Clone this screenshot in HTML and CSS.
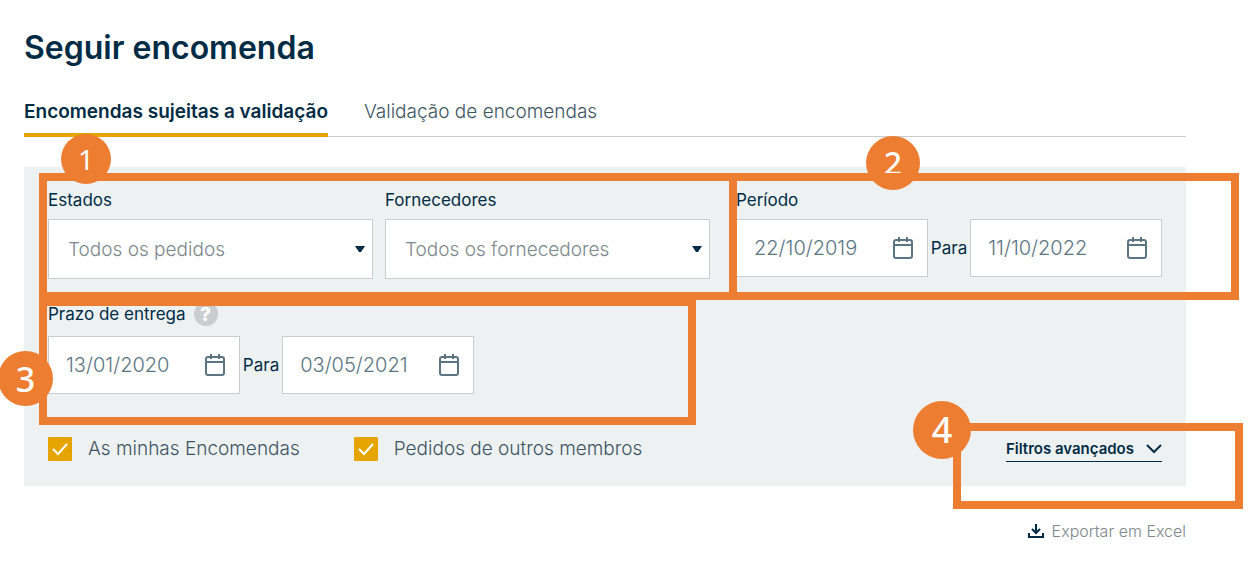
FILE: index.html
```html
<!DOCTYPE html>
<html lang="pt">
<head>
  <meta charset="UTF-8" />
  <meta name="viewport" content="width=device-width, initial-scale=1.0" />
  <title>Seguir encomenda</title>
  <link rel="stylesheet" href="styles.css">
</head>
<body>
  <!-- shared icons -->
  <svg class="sprite" aria-hidden="true">
    <symbol id="calendar" viewBox="0 0 20 24">
      <rect x="1" y="4" width="18" height="18" rx="2" fill="none" stroke="currentColor" stroke-width="2"/>
      <path d="M1 9h18M6 1v5M14 1v5" fill="none" stroke="currentColor" stroke-width="2"/>
    </symbol>
    <symbol id="arrow" viewBox="0 0 10 6">
      <path d="M0 0h10L6 6H4z" fill="currentColor"/>
    </symbol>
  </svg>

  <main class="page">
    <h1>Seguir encomenda</h1>

    <nav class="tabs">
      <a href="#validacao" class="tab active">Encomendas sujeitas a validação</a>
      <a href="#encomendas" class="tab">Validação de encomendas</a>
    </nav>

    <form class="filters">
      <div class="filter-row">
        <div class="selects callout">
          <span class="badge badge-1">1</span>
          <div class="field">
            <label for="estados">Estados</label>
            <div class="select-box">
              <select id="estados" name="estados">
                <option>Todos os pedidos</option>
              </select>
              <svg class="arrow"><use href="#arrow"/></svg>
            </div>
          </div>
          <div class="field">
            <label for="fornecedores">Fornecedores</label>
            <div class="select-box">
              <select id="fornecedores" name="fornecedores">
                <option>Todos os fornecedores</option>
              </select>
              <svg class="arrow"><use href="#arrow"/></svg>
            </div>
          </div>
          <span class="frame frame-1"></span>
        </div>

        <div class="period callout">
          <span class="badge badge-2">2</span>
          <label for="periodo-de">Período</label>
          <div class="date-range">
            <div class="date-box">
              <input type="text" id="periodo-de" name="periodo-de" value="22/10/2019">
              <button type="button" class="calendar" aria-label="Calendário"><svg><use href="#calendar"/></svg></button>
            </div>
            <label for="periodo-ate" class="to">Para</label>
            <div class="date-box">
              <input type="text" id="periodo-ate" name="periodo-ate" value="11/10/2022">
              <button type="button" class="calendar" aria-label="Calendário"><svg><use href="#calendar"/></svg></button>
            </div>
          </div>
          <span class="frame frame-2"></span>
        </div>
      </div>

      <div class="delivery callout">
        <div class="label-row">
          <label for="prazo-de">Prazo de entrega</label>
          <button type="button" class="help">?</button>
        </div>
        <div class="date-range">
          <div class="date-box">
            <input type="text" id="prazo-de" name="prazo-de" value="13/01/2020">
            <button type="button" class="calendar" aria-label="Calendário"><svg><use href="#calendar"/></svg></button>
          </div>
          <label for="prazo-ate" class="to">Para</label>
          <div class="date-box">
            <input type="text" id="prazo-ate" name="prazo-ate" value="03/05/2021">
            <button type="button" class="calendar" aria-label="Calendário"><svg><use href="#calendar"/></svg></button>
          </div>
        </div>
        <span class="frame frame-3"></span>
        <span class="badge badge-3">3</span>
      </div>

      <div class="options">
        <div class="check">
          <span class="check-box">
            <input type="checkbox" id="minhas" name="minhas" checked>
            <svg class="tick" viewBox="0 0 24 24"><path d="M5 12l5 5 9-10" fill="none" stroke="#fff" stroke-width="2"/></svg>
          </span>
          <label for="minhas">As minhas Encomendas</label>
        </div>
        <div class="check">
          <span class="check-box">
            <input type="checkbox" id="outros" name="outros" checked>
            <svg class="tick" viewBox="0 0 24 24"><path d="M5 12l5 5 9-10" fill="none" stroke="#fff" stroke-width="2"/></svg>
          </span>
          <label for="outros">Pedidos de outros membros</label>
        </div>
        <div class="advanced-box callout">
          <button type="button" class="advanced">
            Filtros avançados
            <svg class="chevron" viewBox="0 0 16 10"><path d="M1 1l7 7 7-7" fill="none" stroke="currentColor" stroke-width="2"/></svg>
          </button>
          <span class="frame frame-4"></span>
          <span class="badge badge-4">4</span>
        </div>
      </div>
    </form>

    <div class="export-row">
      <a href="#excel" class="export">
        <svg class="download" viewBox="0 0 16 14"><path d="M8 0v9M4 5l4 4 4-4M1 9v4h14V9" fill="none" stroke="#002b45" stroke-width="2"/></svg>
        Exportar em Excel
      </a>
    </div>
  </main>
</body>
</html>
```
FILE: styles.css
```css
* {
  box-sizing: border-box;
}

body {
  margin: 0;
  font-family: Inter, "Liberation Sans", sans-serif;
  font-size: 17px;
  line-height: 24px;
  color: #002b45;
  background-color: #fff;
}

input, select, button {
  font-family: inherit;
  color: inherit;
}

button {
  padding: 0;
  border: none;
  background: none;
  cursor: pointer;
}

svg {
  display: block;
}

.sprite {
  position: absolute;
  width: 0;
  height: 0;
}

.page {
  padding: 28px 68px 20px 24px;
}

h1 {
  margin: 0 0 32px;
  font-size: 32px;
  line-height: 40px;
  font-weight: 600;
}

/* tabs */
.tabs {
  display: flex;
  gap: 36px;
  border-bottom: 1px solid #c9cdd0;
}

.tab {
  margin-bottom: -1px;
  padding-bottom: 9px;
  border-bottom: 4px solid transparent;
  font-size: 19px;
  font-weight: 300;
  color: #3d5563;
  text-decoration: none;
}

.tab.active {
  border-bottom-color: #e5a400;
  font-weight: 600;
  color: #002b45;
}

/* filters */
.filters {
  margin-top: 30px;
  padding: 21px 24px 24px;
  background-color: #edf1f2;
}

.filter-row {
  display: flex;
  gap: 26px;
}

.selects {
  flex: 1;
  display: grid;
  grid-template-columns: 1fr 1fr;
  gap: 12px;
}

.field label, .period > label {
  display: block;
  margin-bottom: 7px;
}

.select-box {
  position: relative;
}

select {
  display: block;
  width: 100%;
  height: 60px;
  padding: 0 32px 0 19px;
  border: 1px solid #c9cdd0;
  border-radius: 0;
  appearance: none;
  background-color: #fff;
  font-size: 19px;
  font-weight: 300;
  color: #7d878c;
}

.arrow {
  position: absolute;
  top: 27px;
  right: 8px;
  width: 10px;
  height: 6px;
  pointer-events: none;
}

.period, .delivery {
  width: 426px;
}

.date-range {
  display: flex;
  align-items: center;
  gap: 3px;
}

.date-box {
  flex: 1;
  display: flex;
  align-items: center;
  min-width: 0;
  height: 58px;
  padding: 0 14px 0 17px;
  border: 1px solid #c9cdd0;
  background-color: #fff;
  color: #5b7583;
}

.date-box input {
  flex: 1;
  min-width: 0;
  padding: 0;
  border: none;
  background: none;
  font-size: 20px;
  font-weight: 300;
}

.calendar svg {
  width: 20px;
  height: 24px;
}

.delivery {
  margin-top: 23px;
}

.label-row {
  display: flex;
  gap: 8px;
  margin-bottom: 10px;
}

.help {
  width: 24px;
  height: 24px;
  border-radius: 50%;
  background-color: #c9cdd0;
  color: #fff;
  font-size: 19px;
  font-weight: 800;
}

.options {
  display: flex;
  align-items: flex-start;
  gap: 54px;
  margin-top: 43px;
}

.check {
  display: flex;
  gap: 16px;
  font-size: 19px;
  font-weight: 300;
  color: #3d5563;
}

.check-box {
  position: relative;
}

.check-box input {
  display: block;
  width: 24px;
  height: 24px;
  margin: 0;
  appearance: none;
  border: 1px solid #c9cdd0;
  border-radius: 1px;
  background-color: #fff;
}

.check-box input:checked {
  border-color: #e5a400;
  background-color: #e5a400;
}

.tick {
  position: absolute;
  inset: 0;
  width: 24px;
  height: 24px;
  pointer-events: none;
}

.check-box input:not(:checked) + .tick {
  display: none;
}

.advanced-box {
  margin-left: auto;
}

.advanced {
  display: flex;
  align-items: center;
  gap: 12px;
  border-bottom: 1px solid #002b45;
  font-size: 15px;
  line-height: 24px;
  font-weight: 600;
}

.chevron {
  width: 16px;
  height: 10px;
}

.export-row {
  display: flex;
  justify-content: flex-end;
  margin-top: 33px;
}

.export {
  display: flex;
  align-items: center;
  gap: 8px;
  font-size: 16px;
  font-weight: 300;
  color: #7d878c;
  text-decoration: none;
}

.download {
  width: 16px;
  height: 14px;
}

/* numbered callouts over the form */
.callout {
  position: relative;
}

.frame {
  position: absolute;
  border: 8px solid #ed7d31;
  pointer-events: none;
}

.frame-1 {
  inset: -15px -27px -21px -9px;
}

.frame-2 {
  inset: -15px -77px -21px -7px;
}

.frame-3 {
  inset: -4px -222px -31px -9px;
}

.frame-4 {
  inset: -14px -81px -47px -53px;
}

.badge {
  position: absolute;
  display: flex;
  align-items: center;
  justify-content: center;
  border-radius: 50%;
  background-color: #ed7d31;
  color: #fff;
  font-family: "Noto Sans", sans-serif;
  font-weight: 500;
}

.badge-1 {
  top: -54px;
  left: 13px;
  width: 50px;
  height: 50px;
  font-size: 28px;
  font-weight: 400;
}

.badge-2 {
  top: -52px;
  left: 130px;
  width: 54px;
  height: 54px;
  font-size: 32px;
}

.badge-3 {
  top: 49px;
  left: -50px;
  width: 55px;
  height: 55px;
  font-size: 34px;
}

.badge-4 {
  top: -36px;
  left: -93px;
  width: 58px;
  height: 58px;
  font-size: 36px;
}
```
